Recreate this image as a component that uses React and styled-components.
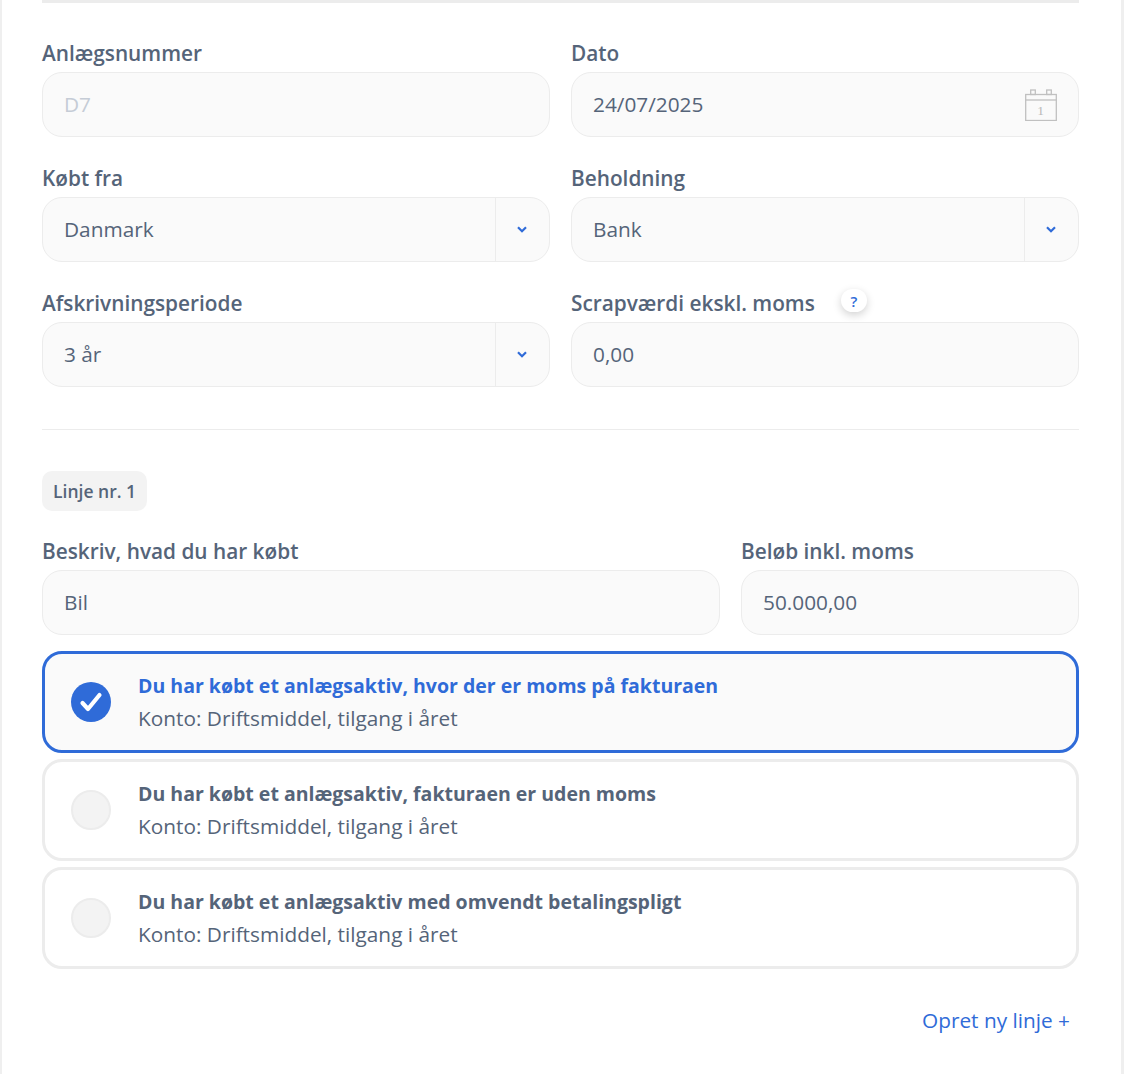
import React from "react";
import styled, { createGlobalStyle } from "styled-components";

const GlobalStyle = createGlobalStyle`
  html, body {
    margin: 0;
    padding: 0;
    background: #ffffff;
  }
  body {
    font-family: "Open Sans", "Noto Sans", sans-serif;
    color: #4f5d75;
  }
`;

const ChevronDown = () => (
  <svg width="10" height="7" viewBox="0 0 10 7">
    <path d="M1 1.2 L5 5.2 L9 1.2" fill="none" stroke="#2f6bd8" strokeWidth="2.2" />
  </svg>
);

const CalendarIcon = () => (
  <svg width="32" height="32" viewBox="0 0 32 32">
    <g fill="none" stroke="#c0c0c0" strokeWidth="1.3">
      <rect x="0.7" y="5.5" width="30.6" height="26" />
      <path d="M0.7 11 H31.3" />
      <rect x="5.7" y="1" width="4.6" height="4.5" />
      <rect x="21.7" y="1" width="4.6" height="4.5" />
    </g>
    <text x="15.5" y="25.5" fontSize="13.5" textAnchor="middle" fill="#b8b8b8" fontFamily="Liberation Serif, serif">1</text>
  </svg>
);

const CheckIcon = () => (
  <svg width="26" height="24" viewBox="0 0 26 24">
    <path d="M4.5 13 L10 19 L21.5 5" fill="none" stroke="#ffffff" strokeWidth="4.2" strokeLinecap="round" strokeLinejoin="round" />
  </svg>
);

const FIELDS = [
  { label: "Anlægsnummer", value: "D7", muted: true },
  { label: "Dato", value: "24/07/2025", calendar: true },
  { label: "Købt fra", value: "Danmark", select: true },
  { label: "Beholdning", value: "Bank", select: true },
  { label: "Afskrivningsperiode", value: "3 år", select: true },
  { label: "Scrapværdi ekskl. moms", value: "0,00", help: true },
];

const OPTIONS = [
  { title: "Du har købt et anlægsaktiv, hvor der er moms på fakturaen", active: true },
  { title: "Du har købt et anlægsaktiv, fakturaen er uden moms" },
  { title: "Du har købt et anlægsaktiv med omvendt betalingspligt" },
];

const Field = ({ label, value, muted, calendar, select, help }) => (
  <FieldWrap>
    <LabelRow>
      <Label>{label}</Label>
      {help && <HelpBadge>?</HelpBadge>}
    </LabelRow>
    <InputBox>
      <InputText $muted={muted}>{value}</InputText>
      {calendar && (
        <CalendarSlot>
          <CalendarIcon />
        </CalendarSlot>
      )}
      {select && (
        <SelectSlot>
          <ChevronDown />
        </SelectSlot>
      )}
    </InputBox>
  </FieldWrap>
);

export default function App() {
  return (
    <>
      <GlobalStyle />
      <Panel>
        <TopRule />
        <TopGrid>
          {FIELDS.map((f) => (
            <Field key={f.label} {...f} />
          ))}
        </TopGrid>
        <Divider />
        <LineBadge>Linje nr. 1</LineBadge>
        <LineGrid>
          <Field label="Beskriv, hvad du har købt" value="Bil" />
          <Field label="Beløb inkl. moms" value="50.000,00" />
        </LineGrid>
        <OptionList>
          {OPTIONS.map((o) => (
            <OptionCard key={o.title} $active={o.active}>
              <Radio $active={o.active}>{o.active && <CheckIcon />}</Radio>
              <OptionText>
                <OptionTitle $active={o.active}>{o.title}</OptionTitle>
                <OptionSub>Konto: Driftsmiddel, tilgang i året</OptionSub>
              </OptionText>
            </OptionCard>
          ))}
        </OptionList>
        <LinkRow>
          <AddLink>Opret ny linje +</AddLink>
        </LinkRow>
      </Panel>
    </>
  );
}

const Panel = styled.div`
  box-sizing: border-box;
  width: 1124px;
  height: 1074px;
  overflow: hidden;
  padding: 0 42px 0 40px;
  border-left: 2px solid #efefef;
  border-right: 3px solid #efefef;
  background: #ffffff;
`;

const TopRule = styled.div`
  height: 3px;
  background: #ececec;
  margin-bottom: 38px;
`;

const TopGrid = styled.div`
  display: grid;
  grid-template-columns: 508px 508px;
  column-gap: 21px;
  row-gap: 29px;
`;

const LineGrid = styled.div`
  display: grid;
  grid-template-columns: 678px 338px;
  column-gap: 21px;
  margin-top: 28px;
`;

const FieldWrap = styled.div`
  display: flex;
  flex-direction: column;
`;

const LabelRow = styled.div`
  display: flex;
  align-items: center;
  height: 24px;
  margin-bottom: 7px;
`;

const Label = styled.span`
  font-size: 20.8px;
  font-weight: 600;
  color: #556479;
  line-height: 24px;
`;

const HelpBadge = styled.span`
  display: flex;
  align-items: center;
  justify-content: center;
  width: 26px;
  height: 23px;
  margin-left: 26px;
  margin-top: -5px;
  border-radius: 12px;
  background: #ffffff;
  box-shadow: 0 3px 8px rgba(0, 0, 0, 0.18);
  color: #2f6bd8;
  font-size: 15px;
  font-weight: 600;
`;

const InputBox = styled.div`
  box-sizing: border-box;
  display: flex;
  align-items: stretch;
  height: 65px;
  border: 1px solid #ececec;
  border-radius: 20px;
  background: #fafafa;
`;

const InputText = styled.span`
  flex: 1;
  display: flex;
  align-items: center;
  padding-left: 21px;
  padding-bottom: 1px;
  font-size: 20.8px;
  color: ${(p) => (p.$muted ? "#c5ccd6" : "#556479")};
`;

const CalendarSlot = styled.span`
  display: flex;
  align-items: center;
  padding-right: 21px;
`;

const SelectSlot = styled.span`
  display: flex;
  align-items: center;
  justify-content: center;
  box-sizing: border-box;
  width: 54px;
  padding-right: 2px;
  border-left: 1px solid #ececec;
`;

const Divider = styled.div`
  height: 1px;
  background: #ececec;
  margin-top: 42px;
  margin-bottom: 41px;
`;

const LineBadge = styled.div`
  display: inline-flex;
  align-items: center;
  box-sizing: border-box;
  height: 40px;
  padding: 0 11px;
  border-radius: 10px;
  background: #f3f3f3;
  color: #556479;
  font-size: 17.5px;
  font-weight: 600;
`;

const OptionList = styled.div`
  display: flex;
  flex-direction: column;
  gap: 6.5px;
  margin-top: 16px;
`;

const OptionCard = styled.div`
  box-sizing: border-box;
  display: flex;
  align-items: center;
  height: 101.5px;
  padding-left: 26px;
  border: 3px solid ${(p) => (p.$active ? "#2f6bd8" : "#ececec")};
  border-radius: 20px;
  background: ${(p) => (p.$active ? "#fafafa" : "#ffffff")};
`;

const Radio = styled.span`
  box-sizing: border-box;
  flex: none;
  display: flex;
  align-items: center;
  justify-content: center;
  width: 40px;
  height: 40px;
  margin-right: 27px;
  border-radius: 50%;
  background: ${(p) => (p.$active ? "#2f6bd8" : "#f3f3f3")};
  border: ${(p) => (p.$active ? "none" : "2px solid #ececec")};
`;

const OptionText = styled.div`
  padding-top: 1px;
`;

const OptionTitle = styled.div`
  font-size: 19.5px;
  font-weight: 700;
  line-height: 28px;
  color: ${(p) => (p.$active ? "#2f6bd8" : "#556479")};
`;

const OptionSub = styled.div`
  font-size: 20.8px;
  font-weight: 400;
  line-height: 28px;
  margin-top: 4px;
  color: #556479;
`;

const LinkRow = styled.div`
  display: flex;
  justify-content: flex-end;
  padding-right: 9px;
  margin-top: 37.5px;
`;

const AddLink = styled.span`
  font-size: 20.8px;
  line-height: 28px;
  color: #2f6bd8;
`;
